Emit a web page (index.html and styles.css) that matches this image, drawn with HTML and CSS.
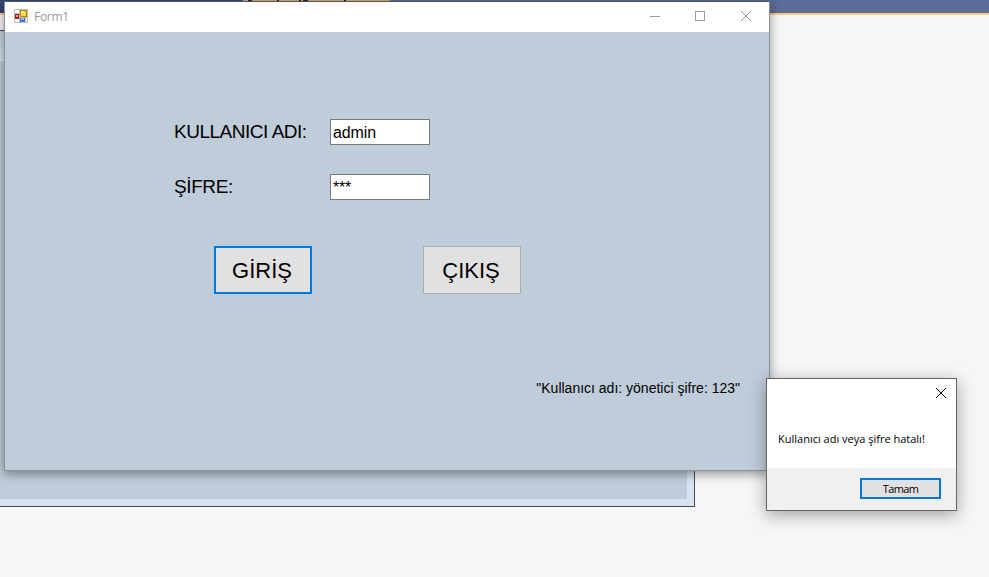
FILE: index.html
```html
<!DOCTYPE html>
<html lang="tr">
<head>
<meta charset="utf-8">
<title>Form1</title>
<link rel="stylesheet" href="styles.css">
</head>
<body>
<div class="desktop">
  <div class="toolbar">
    <div class="code-strip"></div>
    <div class="tab">
      <svg width="147" height="2" viewBox="0 0 147 2" shape-rendering="crispEdges"><path fill="#2b2018" d="M5 0h4v1H5zM34 0h2v2h-2zM56 0h2v2h-2zM60 0h5v1h-5zM101 0h2v2h-2zM132 1h3v1h-3zM139 1h3v1h-3z"/></svg>
    </div>
  </div>
  <div class="designer"><div class="designer-title"></div><div class="designer-body"></div></div>

  <main class="window">
    <header class="titlebar">
      <svg class="app-icon" width="14" height="14" viewBox="0 0 14 14" shape-rendering="crispEdges">
        <path fill="#bcbcbc" d="M0 0h14v14H0z"/>
        <path fill="#fff" d="M1 1h4v3H1zM1 10h4v3H1z"/>
        <path fill="#b98500" d="M6 1h7v7H6z"/>
        <path fill="#ffd84a" d="M7 2h5v5H7z"/>
        <path fill="#ffec9a" d="M7 2h3v2H7z"/>
        <path fill="#a51c12" d="M1 5h4v5H1z"/>
        <path fill="#f0a08c" d="M2 6h2v2H2z"/>
        <path fill="#3f77d2" d="M6 9h5v4H6z"/>
        <path fill="#8fb8f4" d="M7 9h3v2H7z"/>
        <path fill="#fff" d="M12 9h1v4h-1z"/>
      </svg>
      <span class="caption">Form1</span>
      <svg class="controls" width="104" height="12" viewBox="0 0 104 12" fill="none" stroke="#999">
        <path shape-rendering="crispEdges" d="M0 6.5h10M45.500 1.500h9v9h-9z"/>
        <path d="M91 1l10 10M101 1L91 11"/>
      </svg>
    </header>
    <form class="form">
      <div class="row"><label class="label user" for="u">KULLANICI ADI:</label><input class="field" id="u" value="admin"></div>
      <div class="row"><label class="label pass" for="p">ŞİFRE:</label><input class="field stars" id="p" value="***"></div>
      <div class="actions">
        <button class="button default" type="button">GİRİŞ</button>
        <button class="button" type="button">ÇIKIŞ</button>
      </div>
      <p class="hint">"Kullanıcı adı: yönetici şifre: 123"</p>
    </form>
  </main>

  <section class="dialog">
    <div class="dialog-top">
      <svg class="dialog-close" width="12" height="12" viewBox="0 0 12 12" fill="none" stroke="#000"><path d="M1 1l10 10M11 1L1 11"/></svg>
      <p class="message">Kullanıcı adı veya şifre hatalı!</p>
    </div>
    <div class="dialog-foot"><button class="ok" type="button">Tamam</button></div>
  </section>
</div>
</body>
</html>
```
FILE: styles.css
```css
* { box-sizing: border-box; }
body { margin: 0; }
p { margin: 0; }
.desktop {
  position: relative;
  width: 989px;
  height: 577px;
  overflow: hidden;
  background: #f6f6f6;
  color: #000;
  font-family: "Liberation Sans", Arial, sans-serif;
}
.toolbar {
  display: flex;
  height: 15px;
  background: #5d6b99;
  border-bottom: 2px solid #f5cc84;
}
.code-strip { width: 243px; background: #374673; }
.tab { display: flex; width: 147px; height: 2px; background: #d9b166; }
.designer {
  position: absolute;
  left: 0;
  top: 30px;
  width: 695px;
  height: 477px;
  background: #d6e4f1;
  border: solid #4b494d;
  border-width: 1px 1px 1px 0;
}
.designer-title { height: 30px; background: linear-gradient(#bfcddb, #d6e4f1); }
.designer-body { width: 687px; height: 438px; background: #bfccd9; }
.window {
  position: absolute;
  left: 4px;
  top: 1px;
  width: 766px;
  height: 470px;
  border: 1px solid #8b939a;
  border-top-color: #4c5576;
  box-shadow: 0 3px 10px rgba(0, 0, 0, .4);
  background: #bfccd9;
}
.titlebar {
  display: flex;
  height: 30px;
  padding: 7px 15px 0 9px;
  background: #fff;
}
.caption {
  margin-left: 6px;
  color: #999;
  font: 12px/16px "Open Sans", sans-serif;
  letter-spacing: -.3px;
}
.controls { margin: 1px 0 0 auto; }
.form { display: flex; flex-direction: column; padding: 87px 29px 0 169px; }
.row { display: flex; height: 26px; margin-bottom: 29px; }
.label { width: 156px; font-size: 19px; line-height: 25px; white-space: nowrap; }
.user { letter-spacing: -.48px; }
.pass { letter-spacing: -.4px; }
.field {
  width: 100px;
  height: 26px;
  padding: 1px 2px 0;
  border: 1px solid #7a7a7a;
  border-radius: 0;
  outline: 0;
  background: #fff;
  color: #000;
  font: 16px "Liberation Sans", Arial, sans-serif;
  letter-spacing: -.1px;
}
.stars { letter-spacing: -.2px; }
.actions { display: flex; gap: 111px; margin: 17px 0 0 40px; }
.button {
  width: 98px;
  height: 48px;
  padding: 1px 2px 0 0;
  border: 1px solid #adadad;
  background: #e1e1e1;
  color: #000;
  font: 22px "Liberation Sans", Arial, sans-serif;
}
.default { border: 2px solid #0078d7; }
.hint { align-self: flex-end; margin-top: 86px; font-size: 14px; line-height: 17px; white-space: nowrap; }
.dialog {
  position: absolute;
  left: 766px;
  top: 378px;
  width: 191px;
  height: 133px;
  border: 1px solid #646668;
  background: #fff;
  box-shadow: 0 4px 16px rgba(0, 0, 0, .35);
}
.dialog-top { display: flex; flex-direction: column; height: 89px; padding: 8px 9px 0 11px; }
.dialog-close { align-self: flex-end; }
.message { margin-top: 32px; font: 11px/16px "Open Sans", sans-serif; white-space: nowrap; }
.dialog-foot { display: flex; justify-content: flex-end; height: 42px; padding: 10px 15px 0 0; background: #f0f0f0; }
.ok {
  width: 81px;
  height: 21px;
  padding: 0;
  border: 2px solid #0078d7;
  background: #e1e1e1;
  color: #000;
  font: 11px/15px "Open Sans", sans-serif;
  letter-spacing: -.6px;
}
```
